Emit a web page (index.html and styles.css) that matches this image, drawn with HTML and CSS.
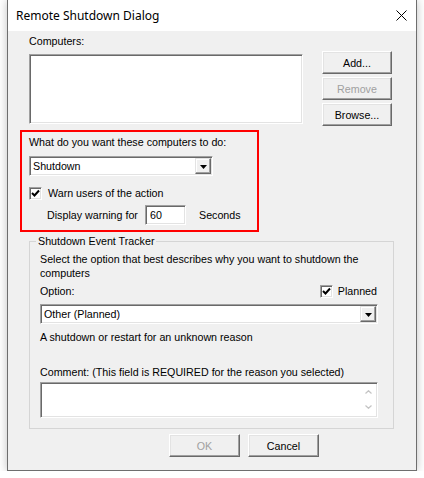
FILE: index.html
```html
<!doctype html>
<html lang="en">
  <head>
    <meta charset="UTF-8" />
    <meta name="viewport" content="width=device-width, initial-scale=1.0" />
    <title>Remote Shutdown Dialog</title>
    <link rel="stylesheet" href="styles.css">
  </head>
  <body>
    <div class="window">
      <div class="titlebar">
        <span class="title">Remote Shutdown Dialog</span>
        <svg class="close" width="11" height="11" viewBox="0 0 11 11">
          <path d="M0.5 0.5L10.5 10.5M10.5 0.5L0.5 10.5" stroke="#000" stroke-width="1" fill="none" />
        </svg>
      </div>

      <div class="client">
        <!-- Lista de computadores -->
        <div class="computers">
          <div class="computers-list">
            <div>Computers:</div>
            <div class="listbox sunken"></div>
          </div>
          <div class="side-buttons">
            <button class="btn">Add...</button>
            <button class="btn" disabled>Remove</button>
            <button class="btn">Browse...</button>
          </div>
        </div>

        <!-- Ação -->
        <div class="action-box">
          <div>What do you want these computers to do:</div>
          <div class="combo sunken action-combo">
            <span class="combo-text">Shutdown</span>
            <span class="drop">
              <svg width="7" height="4" viewBox="0 0 7 4"><path d="M0 0H7L3.5 4Z" fill="#000" /></svg>
            </span>
          </div>
          <div class="check-row">
            <span class="checkbox sunken">
              <svg width="9" height="9" viewBox="0 0 9 9"><path d="M1 4L3.5 6.5L8 1.5" stroke="#000" stroke-width="2" fill="none" /></svg>
            </span>
            <span>Warn users of the action</span>
          </div>
          <div class="warn-row">
            <span class="warn-label">Display warning for</span>
            <div class="field sunken">60</div>
            <span class="secs">Seconds</span>
          </div>
        </div>

        <!-- Shutdown Event Tracker -->
        <fieldset class="tracker">
          <legend>Shutdown Event Tracker</legend>
          <p class="desc">Select the option that best describes why you want to shutdown the<br>computers</p>
          <div class="option-row">
            <span>Option:</span>
            <span class="planned">
              <span class="checkbox sunken">
                <svg width="9" height="9" viewBox="0 0 9 9"><path d="M1 4L3.5 6.5L8 1.5" stroke="#000" stroke-width="2" fill="none" /></svg>
              </span>
              Planned
            </span>
          </div>
          <div class="combo sunken option-combo">
            <span class="combo-text">Other (Planned)</span>
            <span class="drop">
              <svg width="7" height="4" viewBox="0 0 7 4"><path d="M0 0H7L3.5 4Z" fill="#000" /></svg>
            </span>
          </div>
          <p class="reason">A shutdown or restart for an unknown reason</p>
          <p class="comment-label">Comment: (This field is REQUIRED for the reason you selected)</p>
          <div class="comment sunken">
            <div class="comment-scroll">
              <svg width="7" height="4" viewBox="0 0 7 4"><path d="M0.5 3.5L3.5 0.7L6.5 3.5" stroke="#c4c4c4" stroke-width="1.2" fill="none" /></svg>
              <svg width="7" height="4" viewBox="0 0 7 4"><path d="M0.5 0.5L3.5 3.3L6.5 0.5" stroke="#c4c4c4" stroke-width="1.2" fill="none" /></svg>
            </div>
          </div>
        </fieldset>

        <div class="footer">
          <button class="btn wide" disabled>OK</button>
          <button class="btn wide">Cancel</button>
        </div>
      </div>
    </div>
  </body>
</html>
```

FILE: styles.css
```css
body {
  margin: 0;
  background-color: #fff;
  font-family: "Liberation Sans", Arial, sans-serif;
  font-size: 10.7px;
  line-height: 13px;
  color: #000;
}
.window {
  margin-left: 7px;
  width: 410px;
  height: 471px;
  box-sizing: border-box;
  border: 1px solid #6e6e6e;
  border-top: none;
  background-color: #f0f0f0;
  box-shadow: 0 0 9px rgba(0, 0, 0, 0.25);
}
.titlebar {
  height: 31px;
  box-sizing: border-box;
  padding: 0 9px 0 8px;
  background-color: #fff;
  display: flex;
  align-items: center;
  justify-content: space-between;
}
.title {
  font-family: "Noto Sans", "Open Sans", sans-serif;
  font-size: 12px;
}
.client {
  padding-top: 4px;
}
.sunken {
  box-sizing: border-box;
  border: 1px solid;
  border-color: #a0a0a0 #fff #fff #a0a0a0;
  box-shadow: inset 1px 1px #696969, inset -1px -1px #e3e3e3;
  background-color: #fff;
}
.btn {
  width: 70px;
  height: 23px;
  padding: 0;
  box-sizing: border-box;
  font-family: inherit;
  font-size: 10.7px;
  color: #000;
  background-color: #f0f0f0;
  border: 1px solid;
  border-color: #fff #696969 #696969 #fff;
  box-shadow: inset -1px -1px #a0a0a0, inset 1px 1px #e3e3e3;
}
.btn:disabled {
  color: #a0a0a0;
}
.btn.wide {
  width: 71px;
}

.computers {
  display: flex;
  margin-left: 21px;
}
.computers-list {
  width: 274px;
}
.listbox {
  height: 70px;
  margin-top: 6px;
}
.side-buttons {
  display: flex;
  flex-direction: column;
  gap: 3px;
  margin: 16px 0 0 19px;
}

.action-box {
  width: 239px;
  box-sizing: border-box;
  margin: 4px 0 0 12px;
  padding: 4px 0 5px 7px;
  border: 2px solid #f00;
}
.combo {
  height: 20px;
  padding: 1px;
  display: flex;
  align-items: center;
}
.combo-text {
  flex: 1;
  padding-left: 2px;
}
.drop {
  width: 16px;
  height: 16px;
  box-sizing: border-box;
  background-color: #f0f0f0;
  border: 1px solid;
  border-color: #e3e3e3 #696969 #696969 #e3e3e3;
  box-shadow: inset -1px -1px #a0a0a0, inset 1px 1px #fff;
  display: flex;
  align-items: center;
  justify-content: center;
}
.drop svg {
  margin-top: 1px;
}
.action-combo {
  width: 184px;
  margin-top: 7px;
}
.check-row {
  display: flex;
  align-items: center;
  gap: 6px;
  height: 13px;
  margin-top: 11px;
}
.checkbox {
  width: 13px;
  height: 13px;
  display: flex;
  align-items: center;
  justify-content: center;
}
.warn-row {
  display: flex;
  align-items: center;
  margin: 5px 0 0 18px;
}
.warn-label {
  width: 98px;
}
.field {
  width: 41px;
  height: 20px;
  padding-left: 4px;
  line-height: 18px;
}
.secs {
  margin-left: 13px;
}

.tracker {
  width: 365px;
  min-width: 0;
  box-sizing: border-box;
  margin: 3px 0 0 21px;
  padding: 4px 0 10px 6px;
  border: 1px solid #d5d5d5;
}
.tracker legend {
  padding: 0 2px;
}
.tracker p {
  margin: 0;
}
.desc {
  margin-left: 4px !important;
  line-height: 14px;
}
.option-row {
  width: 338px;
  height: 13px;
  margin: 5px 0 0 4px;
  display: flex;
  align-items: center;
  justify-content: space-between;
}
.planned {
  display: flex;
  align-items: center;
  gap: 5px;
  padding-right: 1px;
}
.option-combo {
  width: 338px;
  margin: 6px 0 0 4px;
}
.reason {
  margin: 7px 0 0 4px !important;
}
.comment-label {
  margin: 22px 0 0 4px !important;
}
.comment {
  width: 338px;
  height: 36px;
  margin: 3px 0 0 4px;
  display: flex;
  justify-content: flex-end;
}
.comment-scroll {
  width: 17px;
  padding-top: 7px;
  display: flex;
  flex-direction: column;
  align-items: center;
  gap: 11px;
}

.footer {
  display: flex;
  gap: 8px;
  margin: 5px 0 0 161px;
}
```
